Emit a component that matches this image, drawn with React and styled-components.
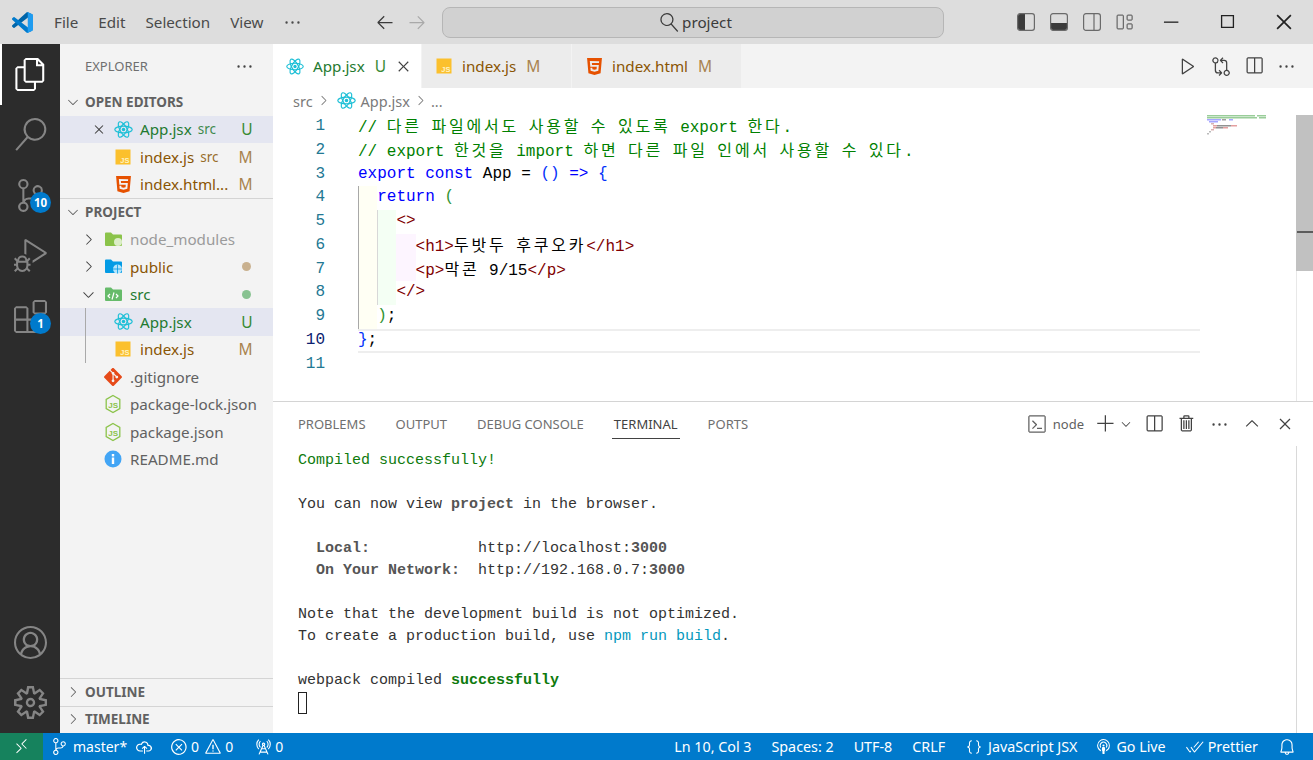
import styled, { createGlobalStyle } from "styled-components";
import {
  VscFiles,
  VscSearch,
  VscSourceControl,
  VscDebugAlt,
  VscExtensions,
  VscAccount,
  VscSettingsGear,
  VscChevronRight,
  VscChevronDown,
  VscChevronUp,
  VscEllipsis,
  VscClose,
  VscArrowLeft,
  VscArrowRight,
  VscLayout,
  VscChromeMinimize,
  VscChromeMaximize,
  VscChromeClose,
  VscPlay,
  VscGitCompare,
  VscSplitHorizontal,
  VscTerminal,
  VscAdd,
  VscTrash,
  VscRemote,
  VscCloudUpload,
  VscError,
  VscWarning,
  VscRadioTower,
  VscBell,
  VscBroadcast,
  VscCheckAll,
  VscJson,
} from "react-icons/vsc";
import { SiHtml5, SiGit } from "react-icons/si";

const UI_FONT = `"Noto Sans", "Open Sans", sans-serif`;
const MONO_FONT = `"Liberation Mono", "DejaVu Sans Mono", monospace`;

const GlobalStyle = createGlobalStyle`
  html, body {
    margin: 0;
    padding: 0;
    height: 100%;
    overflow: hidden;
    background: #fff;
  }
  #root {
    height: 100%;
  }
`;

// ICONS
const ReactIcon = ({ size = 19 }) => (
  <svg width={size} height={size} viewBox="0 0 24 24" fill="none" stroke="#1cbfd6" strokeWidth="1.5">
    <circle cx="12" cy="12" r="2.2" fill="#1cbfd6" stroke="none" />
    <ellipse cx="12" cy="12" rx="11" ry="4.3" />
    <ellipse cx="12" cy="12" rx="11" ry="4.3" transform="rotate(60 12 12)" />
    <ellipse cx="12" cy="12" rx="11" ry="4.3" transform="rotate(120 12 12)" />
  </svg>
);

const JsIcon = () => (
  <svg width="18" height="18" viewBox="0 0 18 18">
    <rect x="1.5" y="1.5" width="15" height="15" fill="#fbc02d" />
    <text x="15.5" y="15" fontSize="7.5" fontWeight="700" fontFamily="Liberation Sans, sans-serif" fill="#fff3c4" textAnchor="end">
      JS
    </text>
  </svg>
);

const Html5Icon = () => <SiHtml5 size={17} color="#e65100" />;

const NodeJsonIcon = () => (
  <svg width="18" height="20" viewBox="0 0 18 20" fill="none">
    <path d="M9 1.5l6.8 3.9v9.2L9 18.5l-6.8-3.9V5.4z" stroke="#8bc34a" strokeWidth="1.3" />
    <text x="9.2" y="13.5" fontSize="8" fontWeight="700" fontFamily="Liberation Sans, sans-serif" fill="#8bc34a" textAnchor="middle">
      JS
    </text>
  </svg>
);

const InfoIcon = () => (
  <svg width="18" height="18" viewBox="0 0 18 18">
    <circle cx="9" cy="9" r="8.5" fill="#42a5f5" />
    <rect x="7.8" y="7.5" width="2.4" height="6.5" fill="#fff" />
    <rect x="7.8" y="4" width="2.4" height="2.4" fill="#fff" />
  </svg>
);

const FolderIcon = ({ color, children }) => (
  <svg width="19" height="17" viewBox="0 0 19 17">
    <path d="M1 2.5a1 1 0 0 1 1-1h5l2 2h8a1 1 0 0 1 1 1V14a1 1 0 0 1-1 1H2a1 1 0 0 1-1-1z" fill={color} />
    {children}
  </svg>
);

const VsLogo = () => (
  <svg width="21" height="21" viewBox="0 0 100 100">
    <path fill="#0065A9" d="M96.461 10.796L75.857.876a6.23 6.23 0 00-7.107 1.207l-67.451 61.5a4.167 4.167 0 00.004 6.162l5.51 5.009a4.167 4.167 0 005.32.236l81.228-61.62c2.725-2.067 6.639-.124 6.639 3.297v-.24a6.25 6.25 0 00-3.539-5.63z" />
    <path fill="#007ACC" d="M96.461 89.204l-20.604 9.92a6.229 6.229 0 01-7.107-1.207l-67.451-61.5a4.167 4.167 0 01.004-6.162l5.51-5.009a4.167 4.167 0 015.32-.236l81.228 61.62c2.725 2.067 6.639.124 6.639-3.297v.24a6.25 6.25 0 01-3.539 5.63z" />
    <path fill="#1F9CF0" d="M75.858 99.126a6.232 6.232 0 01-7.108-1.21c2.306 2.307 6.25.674 6.25-2.588V4.672c0-3.262-3.944-4.895-6.25-2.589a6.232 6.232 0 017.108-1.21l20.6 9.908A6.25 6.25 0 01100 16.413v67.174a6.25 6.25 0 01-3.541 5.633l-20.601 9.906z" />
  </svg>
);

const PanelLayoutIcon = ({ side }) => (
  <svg width="20" height="20" viewBox="0 0 20 20" fill="none">
    {side === "left" && <path d="M2 4a2 2 0 0 1 2-2h5v16H4a2 2 0 0 1-2-2z" fill="#3b3b3b" />}
    {side === "bottom" && <path d="M2 11h16v5a2 2 0 0 1-2 2H4a2 2 0 0 1-2-2z" fill="#3b3b3b" />}
    {side === "right" && <path d="M12 2v16" stroke="#6a6a6a" strokeWidth="1.2" />}
    <rect x="1.6" y="1.6" width="16.8" height="16.8" rx="2.4" stroke="#6a6a6a" strokeWidth="1.2" />
  </svg>
);

const MirroredSearch = styled(VscSearch)`
  transform: scaleX(-1);
`;

// TITLE BAR
const TitleBar = styled.header`
  display: flex;
  align-items: center;
  height: 44px;
  background: #dddddd;
  color: #4a4a4a;
  font-family: ${UI_FONT};
  font-size: 15.2px;
`;
const LogoSlot = styled.div`
  display: flex;
  justify-content: center;
  width: 44px;
  margin-right: 10px;
`;
const Menu = styled.nav`
  display: flex;
  align-items: center;
  gap: 20px;
  width: 321px;
`;
const NavArrows = styled.div`
  display: flex;
  gap: 12px;
  width: 66px;
  color: #3b3b3b;
`;
const CommandCenter = styled.div`
  display: flex;
  align-items: center;
  justify-content: center;
  gap: 3px;
  box-sizing: border-box;
  width: 502px;
  height: 31px;
  margin-left: 1px;
  padding-left: 6px;
  background: #d1d1d1;
  border: 1px solid #b6b6b6;
  border-radius: 8px;
  color: #3b3b3b;
`;
const LayoutButtons = styled.div`
  display: flex;
  align-items: center;
  margin-left: 66px;
`;
const LayoutButton = styled.div`
  display: flex;
  justify-content: center;
  width: 32.7px;
  color: #6a6a6a;
`;
const WindowButtons = styled.div`
  display: flex;
  margin-left: 1px;
`;
const WindowButton = styled.div`
  display: flex;
  justify-content: center;
  width: 57px;
  color: #222;
`;

// MAIN LAYOUT
const Shell = styled.div`
  display: grid;
  grid-template-columns: minmax(0, 1fr);
  grid-template-rows: 44px 1fr 27px;
  height: 760px;
  width: 1313px;
`;
const Workbench = styled.div`
  display: grid;
  grid-template-columns: 60px 213px minmax(0, 1fr);
  min-height: 0;
`;

// ACTIVITY BAR
const ActivityBar = styled.aside`
  display: flex;
  flex-direction: column;
  justify-content: space-between;
  background: #2c2c2c;
`;
const ActivityGroup = styled.div`
  display: flex;
  flex-direction: column;
`;
const ActivityItem = styled.div`
  position: relative;
  display: flex;
  align-items: center;
  justify-content: center;
  height: 60.5px;
  color: ${(p) => (p.$active ? "#ffffff" : "#858585")};
  border-left: 2px solid ${(p) => (p.$active ? "#ffffff" : "transparent")};
  border-right: 2px solid transparent;
  box-sizing: border-box;
`;
const Badge = styled.span`
  position: absolute;
  top: 27px;
  left: 28px;
  display: flex;
  align-items: center;
  justify-content: center;
  width: 21px;
  height: 21px;
  border-radius: 50%;
  background: #007acc;
  color: #fff;
  font-family: ${UI_FONT};
  font-size: 11.5px;
  font-weight: 700;
`;

// SIDEBAR
const Sidebar = styled.section`
  display: flex;
  flex-direction: column;
  background: #f3f3f3;
  font-family: ${UI_FONT};
  font-size: 15.2px;
  color: #616161;
  min-height: 0;
`;
const SidebarTitle = styled.div`
  display: flex;
  align-items: center;
  justify-content: space-between;
  height: 44px;
  padding: 0 19px 0 25px;
  font-size: 13px;
  color: #6f6f6f;
`;
const SectionHeader = styled.div`
  display: flex;
  align-items: center;
  gap: 4px;
  height: 27.5px;
  box-sizing: border-box;
  padding-left: 5px;
  padding-bottom: ${(p) => (p.$divided ? "1px" : "0")};
  font-size: 13.5px;
  font-weight: 700;
  color: #616161;
  border-top: ${(p) => (p.$divided ? "1px solid #d4d4d4" : "none")};
`;
const Row = styled.div`
  display: flex;
  align-items: center;
  height: 27.5px;
  padding: 0 20.5px 0 ${(p) => p.$indent}px;
  background: ${(p) => (p.$selected ? "#e4e6f1" : "transparent")};
  color: ${(p) => p.$color || "#616161"};
  white-space: nowrap;
`;
const CloseSlot = styled.span`
  display: flex;
  justify-content: center;
  width: 16px;
  margin-right: 6px;
  color: #424242;
`;
const ChevronSlot = styled.span`
  display: flex;
  justify-content: center;
  width: 18px;
  margin-right: 6px;
  color: #424242;
`;
const IconSlot = styled.span`
  display: flex;
  flex-shrink: 0;
  align-items: center;
  justify-content: center;
  width: 20px;
  margin-right: 7px;
`;
const Description = styled.span`
  margin-left: 6px;
  font-size: 13.5px;
  opacity: 0.85;
`;
const GitStatus = styled.span`
  margin-left: auto;
  font-size: 15.5px;
  color: ${(p) => p.$color};
`;
const GitDot = styled.span`
  margin-left: auto;
  margin-right: 2px;
  width: 9px;
  height: 9px;
  border-radius: 50%;
  background: ${(p) => p.$color};
`;
const Nested = styled.div`
  position: relative;
  &::before {
    content: "";
    position: absolute;
    left: 25px;
    top: 0;
    bottom: 0;
    width: 1px;
    background: #a9a9a9;
  }
`;
const SidebarSpacer = styled.div`
  flex: 1;
`;

// EDITOR
const Main = styled.main`
  display: flex;
  flex-direction: column;
  min-width: 0;
  min-height: 0;
`;
const TabStrip = styled.div`
  display: flex;
  align-items: center;
  height: 44px;
  background: #f3f3f3;
  font-family: ${UI_FONT};
  font-size: 15.2px;
`;
const Tab = styled.div`
  display: flex;
  align-items: center;
  box-sizing: border-box;
  width: ${(p) => p.$width}px;
  height: 44px;
  padding-left: 13px;
  background: ${(p) => (p.$active ? "#ffffff" : "#ececec")};
  border-right: 1px solid #f3f3f3;
  color: ${(p) => p.$color};
`;
const TabIcon = styled.span`
  display: flex;
  justify-content: center;
  width: 18px;
  margin-right: 9px;
`;
const TabStatus = styled.span`
  margin-left: 10px;
  font-size: 15.5px;
  color: ${(p) => p.$color};
`;
const TabClose = styled.span`
  display: flex;
  margin-left: 8px;
  color: #424242;
`;
const EditorActions = styled.div`
  display: flex;
  align-items: center;
  gap: 13px;
  margin-left: auto;
  padding-right: 17px;
  color: #424242;
`;
const Breadcrumbs = styled.div`
  display: flex;
  align-items: center;
  gap: 3px;
  box-sizing: border-box;
  height: 27px;
  padding: 0 0 2px 20px;
  font-family: ${UI_FONT};
  font-size: 14.5px;
  color: #7a7a7a;
`;
const CrumbIcon = styled.span`
  display: flex;
  margin: 0 2px 0 3px;
`;
const EditorBody = styled.div`
  display: flex;
  flex: 0 0 286px;
  min-height: 0;
`;
const Gutter = styled.div`
  flex: 0 0 85px;
  box-sizing: border-box;
  padding-right: 33px;
  text-align: right;
  font-family: ${MONO_FONT};
  font-size: 16px;
  line-height: 23.75px;
`;
const LineNumber = styled.div`
  height: 23.75px;
  color: ${(p) => (p.$current ? "#0b216f" : "#237893")};
`;
const Code = styled.div`
  flex: 1;
  min-width: 0;
  font-family: ${MONO_FONT};
  font-size: 16px;
  color: #000;
`;
const CodeLine = styled.div`
  display: flex;
  box-sizing: border-box;
  height: 23.75px;
  line-height: ${(p) => (p.$current ? "19.75px" : "23.75px")};
  white-space: pre;
  border-top: ${(p) => (p.$current ? "2px solid #eeeeee" : "none")};
  border-bottom: ${(p) => (p.$current ? "2px solid #eeeeee" : "none")};
`;
const Guide = styled.span`
  flex: 0 0 19.2px;
  box-sizing: border-box;
  background: ${(p) => p.$tint};
  border-left: ${(p) => p.$edge || "none"};
`;
const Tok = styled.span`
  color: ${(p) => p.$c || "#000"};
`;
const Han = styled.span`
  font-family: "Noto Sans CJK KR", sans-serif;
  font-size: 16px;
  letter-spacing: 2.8px;
  line-height: 20px;
`;
const Minimap = styled.div`
  flex: 0 0 96px;
  padding-left: 7px;
  box-sizing: border-box;
`;
const ScrollTrack = styled.div`
  position: relative;
  flex: 0 0 17px;
  box-sizing: border-box;
  border-left: 1px solid #e8e8e8;
`;
const ScrollThumb = styled.div`
  height: 156px;
  margin-left: -1px;
  background: #c1c1c1;
  &::after {
    content: "";
    position: absolute;
    top: 116px;
    left: 0;
    right: 0;
    height: 2px;
    background: #5c5c5c;
  }
`;

// PANEL
const Panel = styled.section`
  display: flex;
  flex-direction: column;
  flex: 1;
  min-height: 0;
  border-top: 1px solid #d4d4d4;
`;
const PanelHeader = styled.div`
  display: flex;
  align-items: center;
  height: 44px;
  padding-left: 25px;
  font-family: ${UI_FONT};
  font-size: 13px;
  color: #6f6f6f;
`;
const PanelTabs = styled.div`
  display: flex;
  gap: 30px;
`;
const PanelTab = styled.div`
  position: relative;
  color: ${(p) => (p.$active ? "#424242" : "#6f6f6f")};
  &::after {
    content: "";
    display: ${(p) => (p.$active ? "block" : "none")};
    position: absolute;
    left: -2px;
    right: -2px;
    bottom: -6px;
    height: 1px;
    background: #424242;
  }
`;
const PanelActions = styled.div`
  display: flex;
  align-items: center;
  gap: 13px;
  margin-left: auto;
  padding-right: 18px;
  color: #424242;
`;
const TerminalLabel = styled.div`
  display: flex;
  align-items: center;
  gap: 6px;
  margin-right: -1px;
  font-size: 13px;
  color: #616161;
`;
const PlusGroup = styled.div`
  display: flex;
  align-items: center;
  gap: 3px;
  margin-right: -2px;
`;
const TerminalWrap = styled.div`
  flex: 1;
  margin-right: 16px;
  padding: 4px 0 0 25px;
  border-right: 1px solid #d9d9d9;
  min-height: 0;
  font-family: ${MONO_FONT};
  font-size: 15px;
  color: #333;
`;
const TermLine = styled.div`
  height: 22px;
  line-height: 22px;
  white-space: pre;
`;
const TermBold = styled.b`
  color: ${(p) => p.$c || "#555"};
`;
const TermColor = styled.span`
  color: ${(p) => p.$c};
`;
const Cursor = styled.span`
  display: block;
  box-sizing: border-box;
  width: 9px;
  height: 22px;
  border: 1px solid #222;
`;

// STATUS BAR
const StatusBar = styled.footer`
  display: flex;
  align-items: center;
  height: 27px;
  background: #007acc;
  color: #fff;
  font-family: ${UI_FONT};
  font-size: 14.3px;
  white-space: nowrap;
`;
const RemoteButton = styled.div`
  display: flex;
  align-items: center;
  justify-content: center;
  width: 43px;
  height: 27px;
  background: #16825d;
`;
const StatusLeft = styled.div`
  display: flex;
  align-items: center;
  padding-left: 8px;
  font-size: 14px;
`;
const StatusItem = styled.span`
  display: flex;
  align-items: center;
  gap: ${(p) => p.$gap ?? 4}px;
  margin-left: ${(p) => p.$ml ?? 0}px;
`;
const StatusRight = styled.div`
  display: flex;
  align-items: center;
  gap: 20px;
  margin-left: auto;
  padding-right: 17px;
`;

const minimapBars = [
  [0, 0, 48, "#7fc07f"], [50, 0, 9, "#7fc07f"],
  [0, 2, 50, "#7fc07f"], [52, 2, 7, "#7fc07f"],
  [0, 4, 14, "#8f8fff"], [15, 4, 4, "#888"], [22, 4, 4, "#8f8fff"],
  [2, 6, 9, "#8f8fff"],
  [4, 8, 3, "#d0a0a0"],
  [6, 10, 4, "#d88"], [10, 10, 14, "#777"], [24, 10, 6, "#d88"],
  [6, 12, 3, "#d88"], [9, 12, 7, "#777"], [16, 12, 5, "#d88"],
  [4, 14, 3, "#d0a0a0"],
  [2, 16, 2, "#aaa"],
  [0, 18, 2, "#aaa"],
];

const codeLines = [
  { indent: 0, body: (
    <Tok $c="#008000">// <Han>다른</Han> <Han>파일에서도</Han> <Han>사용할</Han> <Han>수</Han> <Han>있도록</Han> export <Han>한다</Han>.</Tok>
  ) },
  { indent: 0, body: (
    <Tok $c="#008000">// export <Han>한것을</Han> import <Han>하면</Han> <Han>다른</Han> <Han>파일</Han> <Han>인에서</Han> <Han>사용할</Han> <Han>수</Han> <Han>있다</Han>.</Tok>
  ) },
  { indent: 0, body: (
    <>
      <Tok $c="#0000ff">export const</Tok> App = <Tok $c="#0431fa">()</Tok> <Tok $c="#0000ff">=&gt;</Tok> <Tok $c="#0431fa">{"{"}</Tok>
    </>
  ) },
  { indent: 1, body: (<><Tok $c="#0000ff">return</Tok> <Tok $c="#319331">(</Tok></>) },
  { indent: 2, body: <Tok $c="#800000">&lt;&gt;</Tok> },
  { indent: 3, body: (<><Tok $c="#800000">&lt;h1&gt;</Tok><Han>두밧두</Han> <Han>후쿠오카</Han><Tok $c="#800000">&lt;/h1&gt;</Tok></>) },
  { indent: 3, body: (<><Tok $c="#800000">&lt;p&gt;</Tok><Han>막콘</Han> 9/15<Tok $c="#800000">&lt;/p&gt;</Tok></>) },
  { indent: 2, body: <Tok $c="#800000">&lt;/&gt;</Tok> },
  { indent: 1, body: (<><Tok $c="#319331">)</Tok>;</>) },
  { indent: 0, current: true, body: (<><Tok $c="#0431fa">{"}"}</Tok>;</>) },
  { indent: 0, body: "" },
];

const guides = [
  { tint: "#fffff4", edge: "1.5px solid #a8a8a8" },
  { tint: "#f4fff4", edge: "1px solid #d8d8d8" },
  { tint: "#fdf5ff" },
];

export default function App() {
  return (
    <Shell>
      <GlobalStyle />
      <TitleBar>
        <LogoSlot><VsLogo /></LogoSlot>
        <Menu>
          <span>File</span>
          <span>Edit</span>
          <span>Selection</span>
          <span>View</span>
          <VscEllipsis size={19} />
        </Menu>
        <NavArrows>
          <VscArrowLeft size={20} />
          <VscArrowRight size={20} color="#a9a9a9" />
        </NavArrows>
        <CommandCenter>
          <MirroredSearch size={19} />
          <span>project</span>
        </CommandCenter>
        <LayoutButtons>
          <LayoutButton><PanelLayoutIcon side="left" /></LayoutButton>
          <LayoutButton><PanelLayoutIcon side="bottom" /></LayoutButton>
          <LayoutButton><PanelLayoutIcon side="right" /></LayoutButton>
          <LayoutButton><VscLayout size={20} /></LayoutButton>
        </LayoutButtons>
        <WindowButtons>
          <WindowButton><VscChromeMinimize size={21} /></WindowButton>
          <WindowButton><VscChromeMaximize size={21} /></WindowButton>
          <WindowButton><VscChromeClose size={22} /></WindowButton>
        </WindowButtons>
      </TitleBar>

      <Workbench>
        <ActivityBar>
          <ActivityGroup>
            <ActivityItem $active><VscFiles size={33} /></ActivityItem>
            <ActivityItem><VscSearch size={33} /></ActivityItem>
            <ActivityItem>
              <VscSourceControl size={33} />
              <Badge>10</Badge>
            </ActivityItem>
            <ActivityItem><VscDebugAlt size={33} /></ActivityItem>
            <ActivityItem>
              <VscExtensions size={33} />
              <Badge>1</Badge>
            </ActivityItem>
          </ActivityGroup>
          <ActivityGroup>
            <ActivityItem><VscAccount size={33} /></ActivityItem>
            <ActivityItem><VscSettingsGear size={33} /></ActivityItem>
          </ActivityGroup>
        </ActivityBar>

        <Sidebar>
          <SidebarTitle>
            <span>EXPLORER</span>
            <VscEllipsis size={19} color="#424242" />
          </SidebarTitle>
          <SectionHeader><VscChevronDown size={16} />OPEN EDITORS</SectionHeader>
          <Row $indent={31} $selected $color="#1f7a30">
            <CloseSlot><VscClose size={19} /></CloseSlot>
            <IconSlot><ReactIcon /></IconSlot>
            <span>App.jsx</span>
            <Description>src</Description>
            <GitStatus $color="#388a34">U</GitStatus>
          </Row>
          <Row $indent={53} $color="#895503">
            <IconSlot><JsIcon /></IconSlot>
            <span>index.js</span>
            <Description>src</Description>
            <GitStatus $color="#a9834f">M</GitStatus>
          </Row>
          <Row $indent={53} $color="#895503">
            <IconSlot><Html5Icon /></IconSlot>
            <span>index.html...</span>
            <GitStatus $color="#a9834f">M</GitStatus>
          </Row>
          <SectionHeader $divided><VscChevronDown size={16} />PROJECT</SectionHeader>
          <Row $indent={19} $color="#9b9b9b">
            <ChevronSlot><VscChevronRight size={17} /></ChevronSlot>
            <IconSlot>
              <FolderIcon color="#8bc34a"><circle cx="14" cy="11" r="4" fill="#dcedc8" /></FolderIcon>
            </IconSlot>
            <span>node_modules</span>
          </Row>
          <Row $indent={19} $color="#895503">
            <ChevronSlot><VscChevronRight size={17} /></ChevronSlot>
            <IconSlot>
              <FolderIcon color="#039be5">
                <circle cx="13.5" cy="11" r="4.5" fill="#b3e5fc" />
                <path d="M9 11h9M13.5 6.5v9" stroke="#039be5" strokeWidth="0.8" />
              </FolderIcon>
            </IconSlot>
            <span>public</span>
            <GitDot $color="#c9b18f" />
          </Row>
          <Row $indent={19} $color="#1f7a30">
            <ChevronSlot><VscChevronDown size={17} /></ChevronSlot>
            <IconSlot>
              <FolderIcon color="#66bb6a">
                <path d="M6 12l-2-2 2-2M12 8l2 2-2 2M10 6.5l-2 7" stroke="#fff" strokeWidth="1.2" fill="none" />
              </FolderIcon>
            </IconSlot>
            <span>src</span>
            <GitDot $color="#88c291" />
          </Row>
          <Nested>
            <Row $indent={53} $selected $color="#1f7a30">
              <IconSlot><ReactIcon /></IconSlot>
              <span>App.jsx</span>
              <GitStatus $color="#388a34">U</GitStatus>
            </Row>
            <Row $indent={53} $color="#895503">
              <IconSlot><JsIcon /></IconSlot>
              <span>index.js</span>
              <GitStatus $color="#a9834f">M</GitStatus>
            </Row>
          </Nested>
          <Row $indent={43}>
            <IconSlot><SiGit size={18} color="#e64a19" /></IconSlot>
            <span>.gitignore</span>
          </Row>
          <Row $indent={43}>
            <IconSlot><NodeJsonIcon /></IconSlot>
            <span>package-lock.json</span>
          </Row>
          <Row $indent={43}>
            <IconSlot><NodeJsonIcon /></IconSlot>
            <span>package.json</span>
          </Row>
          <Row $indent={43}>
            <IconSlot><InfoIcon /></IconSlot>
            <span>README.md</span>
          </Row>
          <SidebarSpacer />
          <SectionHeader $divided><VscChevronRight size={16} />OUTLINE</SectionHeader>
          <SectionHeader $divided><VscChevronRight size={16} />TIMELINE</SectionHeader>
        </Sidebar>

        <Main>
          <TabStrip>
            <Tab $width={149} $active $color="#1f7a30">
              <TabIcon><ReactIcon /></TabIcon>
              <span>App.jsx</span>
              <TabStatus $color="#388a34">U</TabStatus>
              <TabClose><VscClose size={19} /></TabClose>
            </Tab>
            <Tab $width={150} $color="#895503">
              <TabIcon><JsIcon /></TabIcon>
              <span>index.js</span>
              <TabStatus $color="#a9834f">M</TabStatus>
            </Tab>
            <Tab $width={170} $color="#895503">
              <TabIcon><Html5Icon /></TabIcon>
              <span>index.html</span>
              <TabStatus $color="#a9834f">M</TabStatus>
            </Tab>
            <EditorActions>
              <VscPlay size={20} />
              <VscGitCompare size={20} />
              <VscSplitHorizontal size={20} />
              <VscEllipsis size={19} />
            </EditorActions>
          </TabStrip>
          <Breadcrumbs>
            <span>src</span>
            <VscChevronRight size={15} />
            <CrumbIcon><ReactIcon /></CrumbIcon>
            <span>App.jsx</span>
            <VscChevronRight size={15} />
            <span>...</span>
          </Breadcrumbs>
          <EditorBody>
            <Gutter>
              {codeLines.map((line, i) => (
                <LineNumber key={i} $current={line.current}>{i + 1}</LineNumber>
              ))}
            </Gutter>
            <Code>
              {codeLines.map((line, i) => (
                <CodeLine key={i} $current={line.current}>
                  {guides.slice(0, line.indent).map((g, j) => (
                    <Guide key={j} $tint={g.tint} $edge={g.edge} />
                  ))}
                  <span>{line.body}</span>
                </CodeLine>
              ))}
            </Code>
            <Minimap>
              <svg width="64" height="22" viewBox="0 0 64 22">
                {minimapBars.map(([x, y, w, c], i) => (
                  <rect key={i} x={x} y={y} width={w} height="1.5" fill={c} opacity="0.8" />
                ))}
              </svg>
            </Minimap>
            <ScrollTrack>
              <ScrollThumb />
            </ScrollTrack>
          </EditorBody>
          <Panel>
            <PanelHeader>
              <PanelTabs>
                <PanelTab>PROBLEMS</PanelTab>
                <PanelTab>OUTPUT</PanelTab>
                <PanelTab>DEBUG CONSOLE</PanelTab>
                <PanelTab $active>TERMINAL</PanelTab>
                <PanelTab>PORTS</PanelTab>
              </PanelTabs>
              <PanelActions>
                <TerminalLabel><VscTerminal size={20} />node</TerminalLabel>
                <PlusGroup>
                  <VscAdd size={20} />
                  <VscChevronDown size={14} />
                </PlusGroup>
                <VscSplitHorizontal size={20} />
                <VscTrash size={20} />
                <VscEllipsis size={19} />
                <VscChevronUp size={20} />
                <VscClose size={20} />
              </PanelActions>
            </PanelHeader>
            <TerminalWrap>
              <TermLine><TermColor $c="#0e7a0d">Compiled successfully!</TermColor></TermLine>
              <TermLine> </TermLine>
              <TermLine>You can now view <TermBold>project</TermBold> in the browser.</TermLine>
              <TermLine> </TermLine>
              <TermLine>  <TermBold>Local:</TermBold>            http://localhost:<TermBold>3000</TermBold></TermLine>
              <TermLine>  <TermBold>On Your Network:</TermBold>  http://192.168.0.7:<TermBold>3000</TermBold></TermLine>
              <TermLine> </TermLine>
              <TermLine>Note that the development build is not optimized.</TermLine>
              <TermLine>To create a production build, use <TermColor $c="#0598bc">npm run build</TermColor>.</TermLine>
              <TermLine> </TermLine>
              <TermLine>webpack compiled <TermBold $c="#0e7a0d">successfully</TermBold></TermLine>
              <Cursor />
            </TerminalWrap>
          </Panel>
        </Main>
      </Workbench>

      <StatusBar>
        <RemoteButton><VscRemote size={17} /></RemoteButton>
        <StatusLeft>
          <StatusItem $gap={5}><VscSourceControl size={17} />master*</StatusItem>
          <StatusItem $ml={8}><VscCloudUpload size={18} /></StatusItem>
          <StatusItem $ml={17} $gap={3}><VscError size={18} />0</StatusItem>
          <StatusItem $ml={5} $gap={3}><VscWarning size={18} />0</StatusItem>
          <StatusItem $ml={21} $gap={3}><VscRadioTower size={18} />0</StatusItem>
        </StatusLeft>
        <StatusRight>
          <StatusItem>Ln 10, Col 3</StatusItem>
          <StatusItem>Spaces: 2</StatusItem>
          <StatusItem>UTF-8</StatusItem>
          <StatusItem>CRLF</StatusItem>
          <StatusItem $gap={5}><VscJson size={18} />JavaScript JSX</StatusItem>
          <StatusItem $ml={-2}><VscBroadcast size={17} />Go Live</StatusItem>
          <StatusItem><VscCheckAll size={18} />Prettier</StatusItem>
          <StatusItem><VscBell size={18} /></StatusItem>
        </StatusRight>
      </StatusBar>
    </Shell>
  );
}
